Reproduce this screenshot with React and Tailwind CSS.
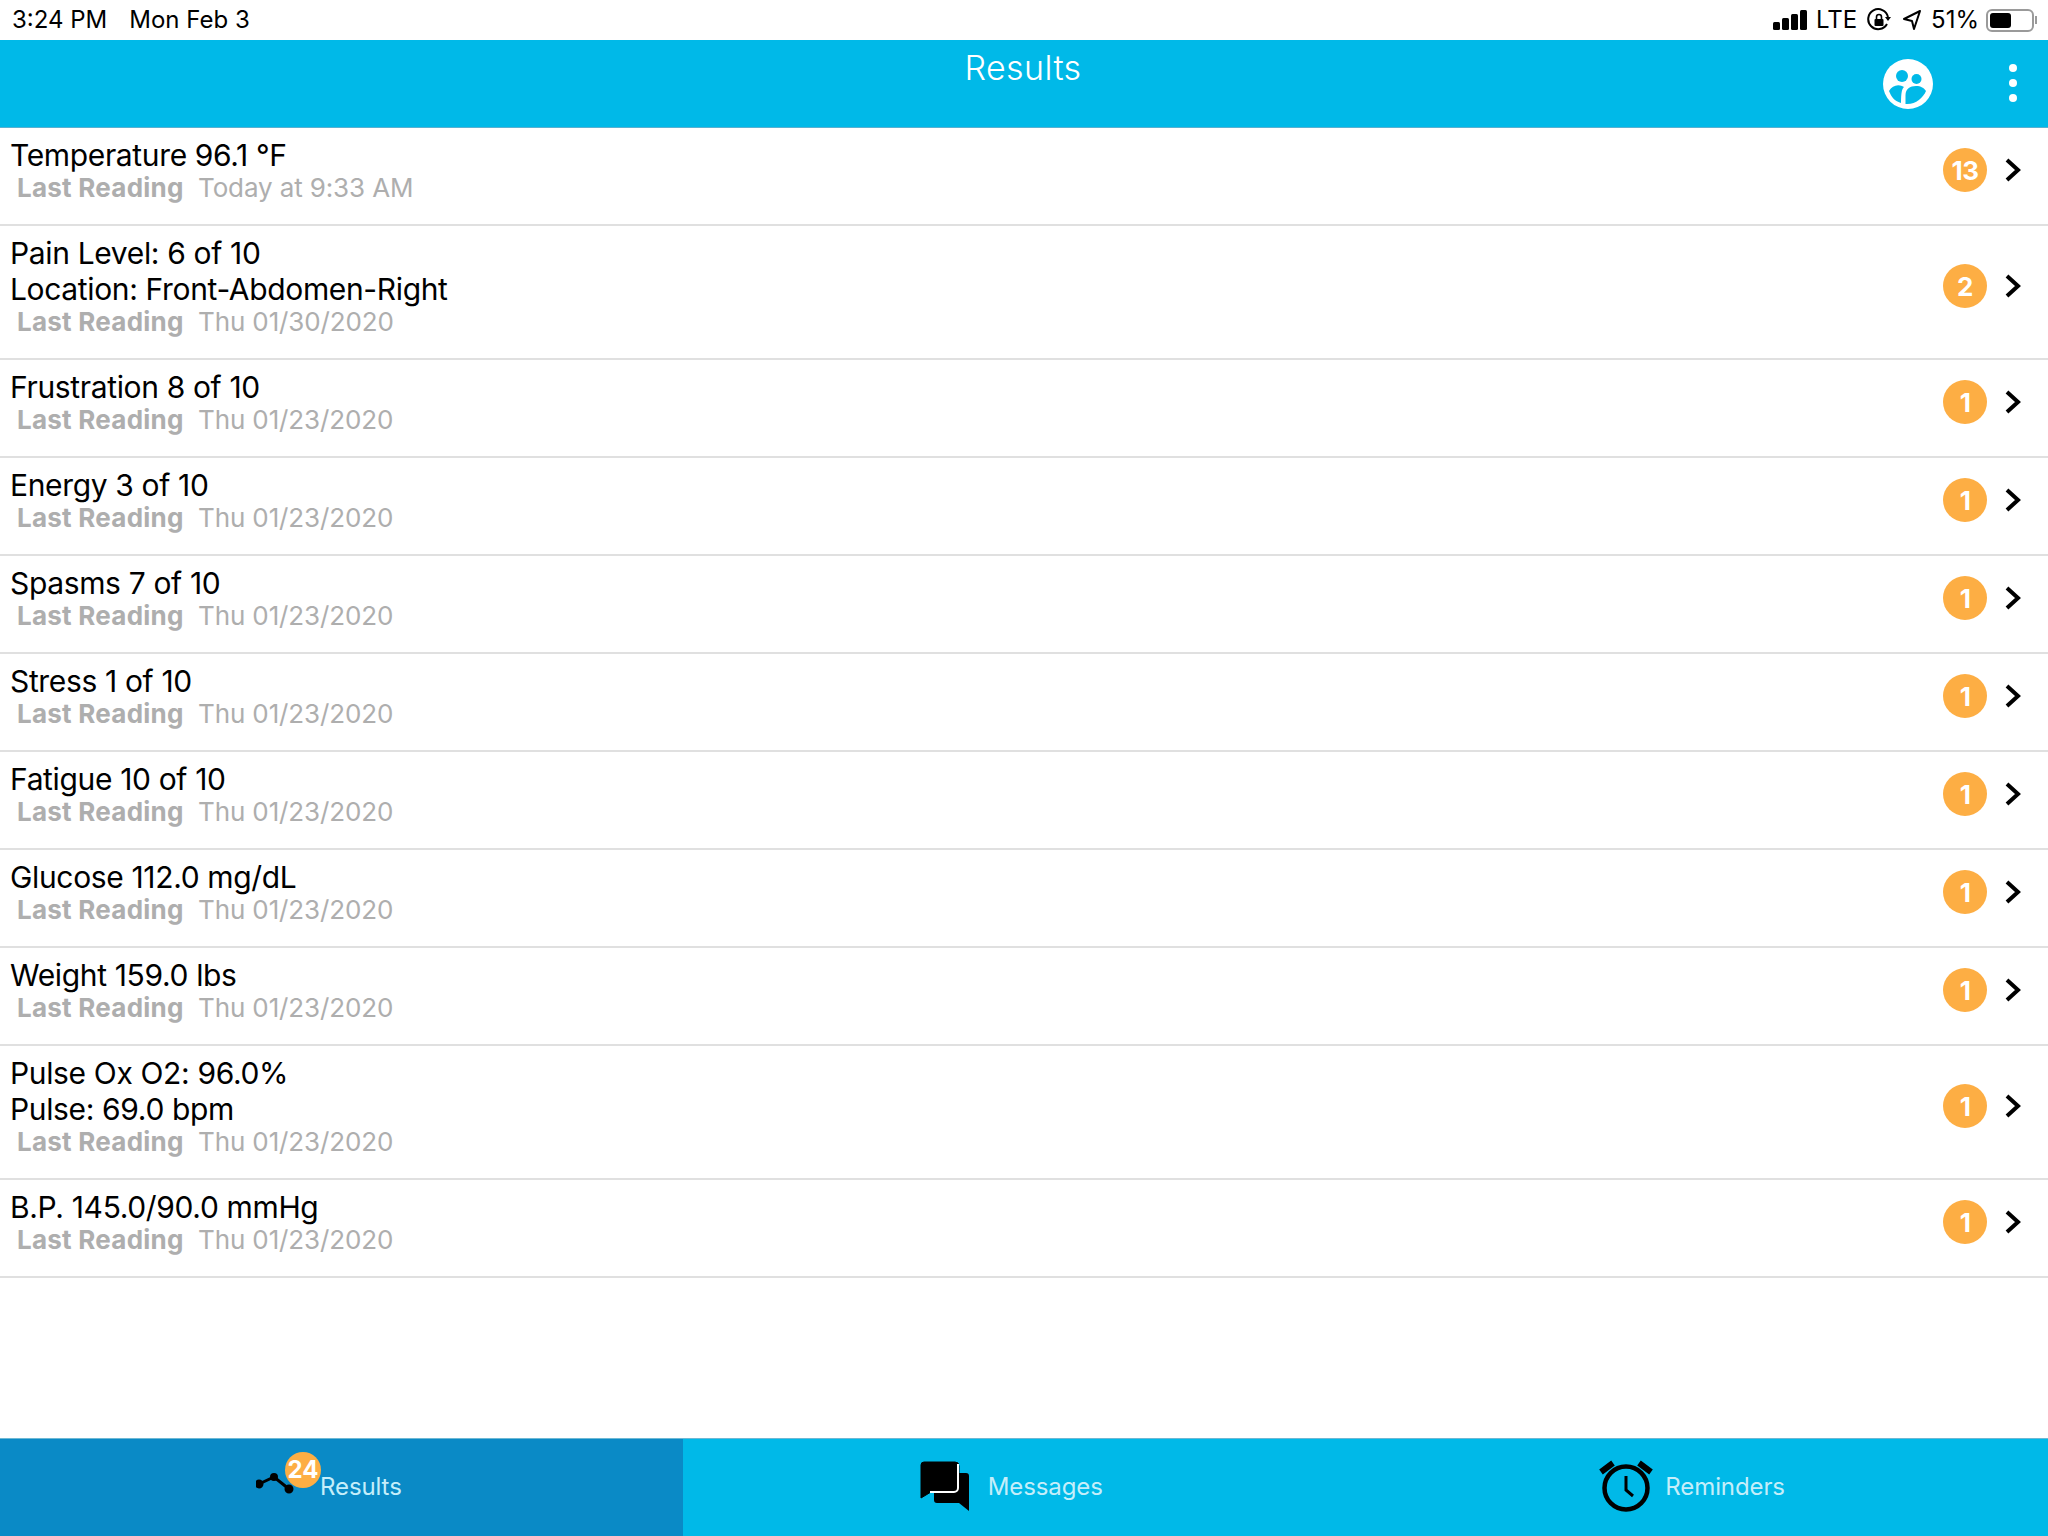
const font = { fontFamily: '"Inter","Liberation Sans",sans-serif' };

const rows = [
  { lines: ["Temperature 96.1 °F"], date: "Today at 9:33 AM", n: 13 },
  { lines: ["Pain Level: 6 of 10", "Location: Front-Abdomen-Right"], date: "Thu 01/30/2020", n: 2 },
  { lines: ["Frustration 8 of 10"], date: "Thu 01/23/2020", n: 1 },
  { lines: ["Energy 3 of 10"], date: "Thu 01/23/2020", n: 1 },
  { lines: ["Spasms 7 of 10"], date: "Thu 01/23/2020", n: 1 },
  { lines: ["Stress 1 of 10"], date: "Thu 01/23/2020", n: 1 },
  { lines: ["Fatigue 10 of 10"], date: "Thu 01/23/2020", n: 1 },
  { lines: ["Glucose 112.0 mg/dL"], date: "Thu 01/23/2020", n: 1 },
  { lines: ["Weight 159.0 lbs"], date: "Thu 01/23/2020", n: 1 },
  { lines: ["Pulse Ox O2: 96.0%", "Pulse: 69.0 bpm"], date: "Thu 01/23/2020", n: 1 },
  { lines: ["B.P. 145.0/90.0 mmHg"], date: "Thu 01/23/2020", n: 1 },
];

function Row({ r }) {
  return (
    <div className="flex items-start justify-between border-b-2 border-[#e0e0e0] pl-[10px] pt-[9px] pb-[21px]">
      <div>
        {r.lines.map((l) => (
          <div key={l} className="text-[30px] leading-[36px] text-black tracking-[-0.35px]">{l}</div>
        ))}
        <div className="flex pl-[7px] text-[26px] leading-[30px] text-[#aeaeae]">
          <span className="font-bold w-[181px] tracking-[0.25px]">Last Reading</span>
          <span className="tracking-[-0.12px]">{r.date}</span>
        </div>
      </div>
      <div className="flex items-center self-center pr-[27px]">
        <div className="w-[44px] h-[44px] rounded-full bg-[#fdae44] text-white flex items-center justify-center font-bold text-[26px] tracking-[-0.5px]">{r.n}</div>
        <svg className="ml-[18px]" width="16" height="24" viewBox="0 0 16 24" fill="none" stroke="black" strokeWidth="4"><path d="M2 2 L13 12 L2 22" /></svg>
      </div>
    </div>
  );
}

export default function App() {
  return (
    <div className="w-[2048px] h-[1536px] flex flex-col bg-white overflow-hidden" style={font}>
      <div className="h-[40px] flex items-center justify-between text-[24px] text-black pl-[12px] pr-[11px]">
        <div className="flex gap-[22px]"><span>3:24 PM</span><span>Mon Feb 3</span></div>
        <div className="flex items-center">
          <svg width="34" height="22" viewBox="0 0 34 22" fill="black">
            <rect x="0" y="13" width="7" height="8" rx="1.5" /><rect x="9" y="9" width="7" height="12" rx="1.5" /><rect x="18" y="5" width="7" height="16" rx="1.5" /><rect x="27" y="1" width="7" height="20" rx="1.5" />
          </svg>
          <span className="ml-[9px]">LTE</span>
          <svg className="ml-[10px]" width="24" height="24" viewBox="0 0 24 24" fill="none" stroke="black" strokeWidth="2">
            <path d="M20 16 A10 10 0 1 1 21 9" /><path d="M18 9 h6 l-3 4 z" fill="black" stroke="none" />
            <rect x="7.5" y="11" width="9" height="7" rx="1" fill="black" stroke="none" /><path d="M9.5 11 V9 a2.5 2.5 0 0 1 5 0 V11" strokeWidth="1.6" />
          </svg>
          <svg className="ml-[11px]" width="20" height="22" viewBox="0 0 20 22" fill="none" stroke="black" strokeWidth="2" strokeLinejoin="round"><path d="M18 2 L2 10 L10 12 L12 20 Z" /></svg>
          <span className="ml-[9px]">51%</span>
          <div className="ml-[7px] w-[48px] h-[23px] rounded-[6px] border-2 border-[#9a9a9a] p-[2px]">
            <div className="w-[21px] h-full bg-black rounded-[3px]" />
          </div>
          <div className="w-[2px] h-[8px] bg-[#9a9a9a] ml-[1px]" />
        </div>
      </div>

      <div className="h-[88px] bg-[#00b9e8] border-b border-[#5ab0d0] flex items-start relative text-white">
        <div className="w-full text-center text-[34px] leading-[40px] pt-[8px] font-light tracking-[0.4px] pr-[2px]">Results</div>
        <svg className="absolute left-[1882px] top-[19px]" width="52" height="50" viewBox="0 0 52 50">
          <circle cx="26" cy="25" r="25" fill="white" />
          <circle cx="20" cy="17" r="6" fill="#00b9e8" /><circle cx="34.5" cy="20" r="5" fill="#00b9e8" />
          <path d="M7 32 C10 27 15 25 20 27 L22 28 C20 30 19 33 19 44 C12 42 9 37 7 32 Z" fill="#00b9e8" />
          <path d="M23.5 45 L23.5 36 C23.5 30 28 27 34 27 C39 27 42 29 44 32 C41 39 33 46 23.5 45 Z" fill="#00b9e8" />
        </svg>
        <div className="absolute left-[2009px] top-[24px] flex flex-col gap-[7px]">
          <div className="w-[8px] h-[8px] rounded-full bg-white" /><div className="w-[8px] h-[8px] rounded-full bg-white" /><div className="w-[8px] h-[8px] rounded-full bg-white" />
        </div>
      </div>

      <div className="flex-1">
        {rows.map((r, i) => <Row key={i} r={r} />)}
      </div>

      <div className="h-[98px] flex text-[24px] text-[#c5eefa] border-t border-[#6db8d4] tracking-[-0.1px]">
        <div className="flex-1 bg-[#0a8ac6] relative">
          <svg className="absolute left-[256px] top-[32px]" width="40" height="24" viewBox="0 0 40 24" fill="none" stroke="black" strokeWidth="3">
            <path d="M3 13 L18 6 L33 18" /><circle cx="3" cy="13" r="3" fill="black" /><circle cx="18" cy="6" r="2.5" fill="black" /><circle cx="33" cy="18" r="3" fill="black" />
          </svg>
          <div className="absolute left-[285px] top-[13px] w-[36px] h-[36px] rounded-full bg-[#fdae44] text-white font-bold flex items-center justify-center text-[24px]">24</div>
          <span className="absolute left-[320px] top-[30px]">Results</span>
        </div>
        <div className="flex-1 bg-[#00b9e8] relative">
          <svg className="absolute left-[237px] top-[22px]" width="52" height="50" viewBox="0 0 52 50">
            <path d="M17 12 H46 a3 3 0 0 1 3 3 V50 L39 42 H17 a3 3 0 0 1 -3 -3 V15 a3 3 0 0 1 3 -3 Z" fill="black" />
            <path d="M4 1 H35 a4 4 0 0 1 4 4 V27 a4 4 0 0 1 -4 4 H11 L1 37 V4 a3 3 0 0 1 3 -3 Z" fill="black" stroke="black" />
            <path d="M38 3 V27 a4 4 0 0 1 -4 4 H10" fill="none" stroke="white" strokeWidth="2" />
          </svg>
          <span className="absolute left-[305px] top-[30px]">Messages</span>
        </div>
        <div className="flex-1 bg-[#00b9e8] relative">
          <svg className="absolute left-[233px] top-[18px]" width="56" height="56" viewBox="0 0 56 56" fill="none" stroke="black">
            <circle cx="28" cy="31" r="21.5" strokeWidth="4.5" />
            <path d="M28 19 V33 L35 39" strokeWidth="3" />
            <path d="M3 15 L15 6 M41 6 L53 15" strokeWidth="6" />
          </svg>
          <span className="absolute left-[300px] top-[30px]">Reminders</span>
        </div>
      </div>
    </div>
  );
}
